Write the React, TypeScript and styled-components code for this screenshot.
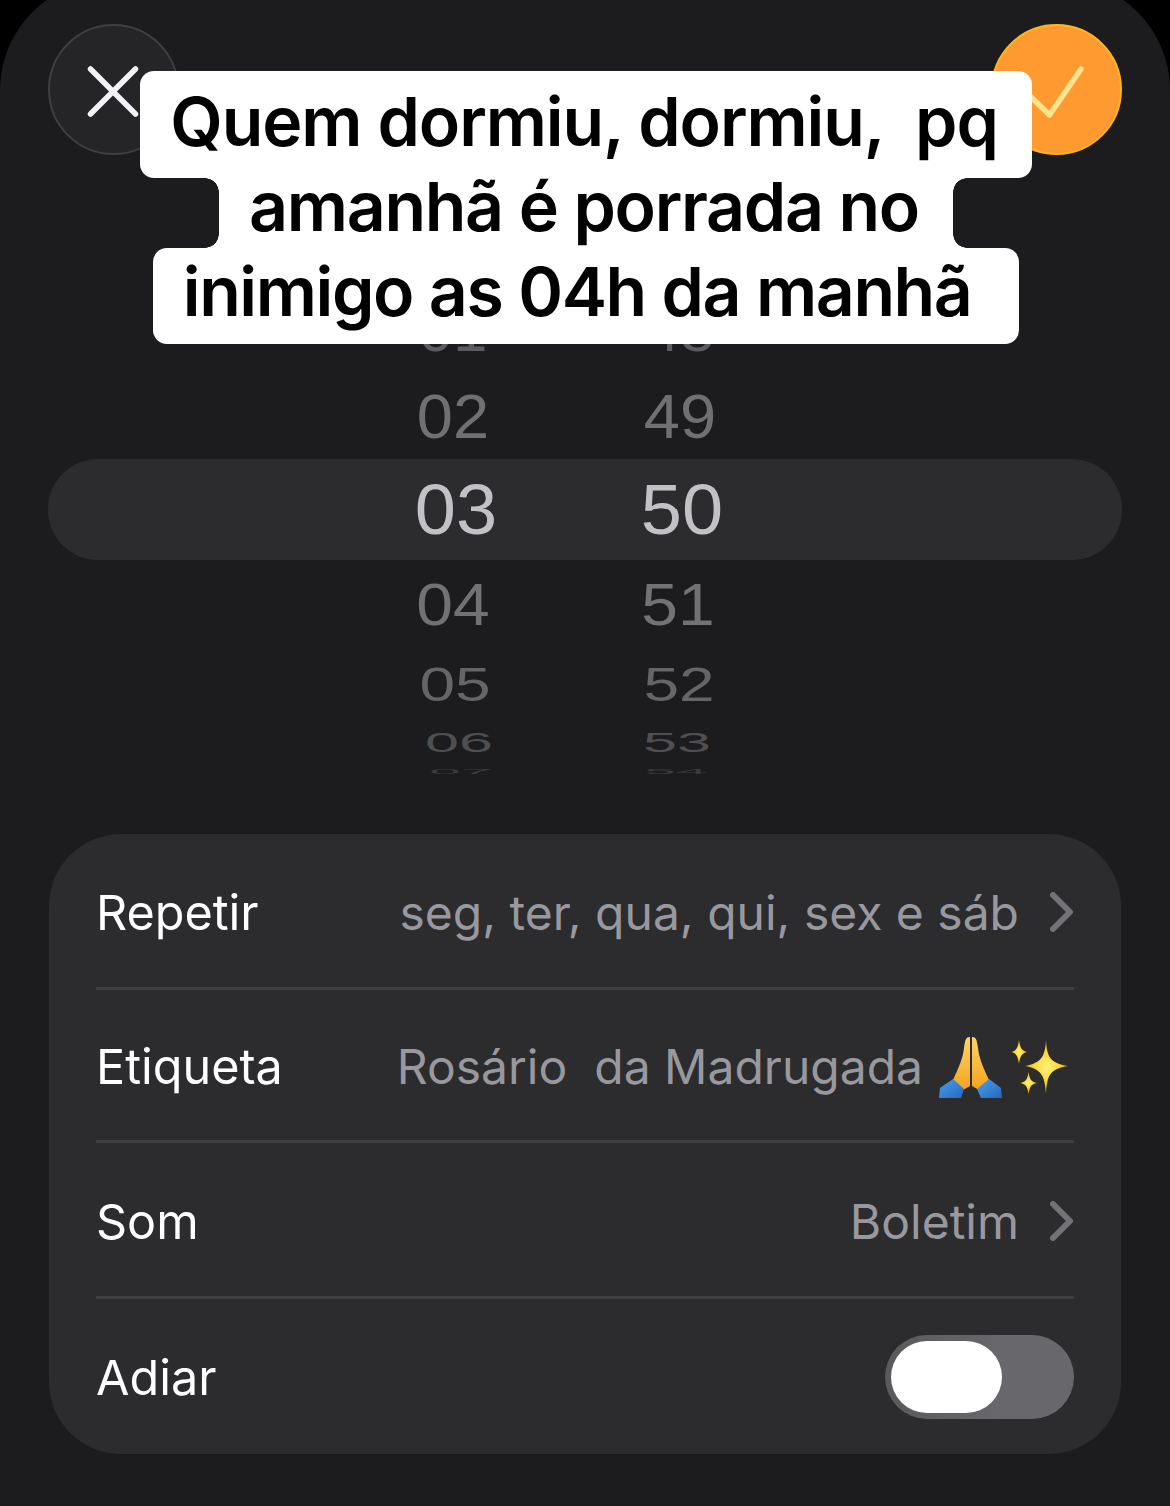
import React from 'react';
import styled, { createGlobalStyle } from 'styled-components';

const GlobalStyle = createGlobalStyle`
  html,
  body {
    margin: 0;
    padding: 0;
    background: #000;
  }
`;

const Page = styled.div`
  position: relative;
  width: 1170px;
  height: 1506px;
  overflow: hidden;
`;

const Sheet = styled.main`
  margin-top: -20px;
  height: 1526px;
  padding-top: 44px;
  box-sizing: border-box;
  background: #1c1c1e;
  border-radius: 110px 110px 0 0;
  font-family: Inter, 'Liberation Sans', sans-serif;
`;

const Header = styled.header`
  display: flex;
  align-items: center;
  justify-content: space-between;
  padding: 0 48px;
  height: 131px;
`;

const RoundButton = styled.button<{ $confirm?: boolean }>`
  display: flex;
  align-items: center;
  justify-content: center;
  width: 131px;
  height: 131px;
  padding: 0;
  box-sizing: border-box;
  border-radius: 50%;
  border: 2px solid ${(p) => (p.$confirm ? '#ffb61e' : '#3f3f41')};
  background: ${(p) => (p.$confirm ? '#ff9a30' : '#252527')};
`;

const Wheel = styled.section`
  margin-top: 136px;
  font-family: 'Liberation Sans', Arial, sans-serif;
`;

const WheelRow = styled.div<{ $height: number; $selected?: boolean }>`
  display: grid;
  grid-template-columns: 100px 100px;
  grid-template-rows: ${(p) => p.$height}px;
  column-gap: 126px;
  align-items: center;
  height: ${(p) => p.$height}px;
  margin: 0 48px;
  padding-left: 357px;
  border-radius: 50px;
  background: ${(p) => (p.$selected ? '#2c2c2f' : 'transparent')};
`;

const Digits = styled.span<{
  $size: number;
  $squash: number;
  $color: string;
  $shift: number;
}>`
  display: block;
  text-align: center;
  line-height: 1;
  font-size: ${(p) => p.$size}px;
  color: ${(p) => p.$color};
  transform: translateX(${(p) => p.$shift}px) scaleY(${(p) => p.$squash});
`;

const Card = styled.section`
  margin: 54px 49px 0;
  padding: 0 47px;
  height: 620px;
  box-sizing: border-box;
  background: #2c2c2e;
  border-radius: 72px;
`;

const Row = styled.div<{ $height: number; $last?: boolean }>`
  display: flex;
  align-items: center;
  justify-content: space-between;
  height: ${(p) => p.$height}px;
  padding-top: ${(p) => (p.$last ? 1 : 3)}px;
  box-sizing: border-box;
  border-bottom: ${(p) => (p.$last ? 'none' : '3px solid #3f3f41')};
`;

const Label = styled.span`
  font-size: 48.5px;
  color: #fff;
`;

const Value = styled.span`
  display: flex;
  align-items: center;
  font-size: 48px;
  color: #98989e;
  white-space: pre;
`;

const Chevron = styled.svg`
  margin-left: 31px;
`;

const HandsIcon = styled.svg`
  margin-left: 16px;
`;

const SparklesIcon = styled.svg`
  margin: 0 6px 0 7px;
`;

const Toggle = styled.div`
  display: flex;
  align-items: center;
  width: 189px;
  height: 84px;
  padding-left: 6px;
  box-sizing: border-box;
  border-radius: 42px;
  background: linear-gradient(90deg, #59595b, #68686c 60%);
`;

const Thumb = styled.div`
  width: 111px;
  height: 72px;
  border-radius: 36px;
  background: #fff;
`;

const Caption = styled.div`
  position: absolute;
  top: 71px;
  left: 2px;
  right: 0;
  display: flex;
  flex-direction: column;
  align-items: center;
  font-family: Inter, 'Liberation Sans', sans-serif;
  font-weight: 600;
  font-size: 68px;
  line-height: 56px;
  color: #000;
`;

const CaptionLine = styled.div<{
  $top: number;
  $bottom: number;
  $left: number;
  $right: number;
  $spacing: number;
  $inset?: boolean;
}>`
  position: relative;
  padding: ${(p) => p.$top}px ${(p) => p.$right}px ${(p) => p.$bottom}px ${(p) => p.$left}px;
  letter-spacing: ${(p) => p.$spacing}px;
  background: #fff;
  border-radius: 14px;
  white-space: pre;

  ${(p) =>
    p.$inset &&
    `
    border-radius: 0;

    &::before,
    &::after {
      content: '';
      position: absolute;
      top: 0;
      bottom: 0;
      width: 14px;
      background-repeat: no-repeat;
      background-size: 14px 14px;
    }

    &::before {
      left: -14px;
      background-image:
        radial-gradient(circle at 0 100%, transparent 13.5px, #fff 14px),
        radial-gradient(circle at 0 0, transparent 13.5px, #fff 14px);
      background-position: top, bottom;
    }

    &::after {
      right: -14px;
      background-image:
        radial-gradient(circle at 100% 100%, transparent 13.5px, #fff 14px),
        radial-gradient(circle at 100% 0, transparent 13.5px, #fff 14px);
      background-position: top, bottom;
    }
  `}
`;

const wheelRows = [
  { height: 80, hour: '01', minute: '48', size: 62, squash: 0.95, color: '#5c5c5e', hourShift: -2, minuteShift: -1 },
  { height: 88, hour: '02', minute: '49', size: 65, squash: 0.98, color: '#707072', hourShift: -2, minuteShift: -1 },
  { height: 101, hour: '03', minute: '50', size: 74, squash: 0.98, color: '#c2c2c6', selected: true, hourShift: 1, minuteShift: 1 },
  { height: 88, hour: '04', minute: '51', size: 66, squash: 0.91, color: '#727274', hourShift: -2, minuteShift: -3 },
  { height: 74, hour: '05', minute: '52', size: 64, squash: 0.74, color: '#656567', hourShift: 0, minuteShift: -2 },
  { height: 40, hour: '06', minute: '53', size: 61, squash: 0.46, color: '#4f4f51', hourShift: 4, minuteShift: -4 },
  { height: 18, hour: '07', minute: '54', size: 57, squash: 0.12, color: '#3a3a3c', hourShift: 6, minuteShift: -5 },
];

const RowChevron = () => (
  <Chevron width="24" height="40" viewBox="0 0 24 40" fill="none">
    <path d="M3 3 L20 20 L3 37" stroke="#727277" strokeWidth="6" strokeLinecap="round" strokeLinejoin="round" />
  </Chevron>
);

const PrayingHands = () => (
  <HandsIcon width="64" height="62" viewBox="0 0 64 62">
    <defs>
      <linearGradient id="skin" x1="0" y1="0" x2="0" y2="1">
        <stop offset="0" stopColor="#ffd566" />
        <stop offset="1" stopColor="#f3a21e" />
      </linearGradient>
      <linearGradient id="sleeve" x1="0" y1="0" x2="1" y2="1">
        <stop offset="0" stopColor="#4b9fec" />
        <stop offset="1" stopColor="#2467bd" />
      </linearGradient>
    </defs>
    <path d="M31 1 C27 1 26 4 25 12 C24 22 20 31 14 44 L24 54 L31 50 Z" fill="url(#skin)" />
    <path d="M33 1 C37 1 38 4 39 12 C40 22 44 31 50 44 L40 54 L33 50 Z" fill="url(#skin)" />
    <path d="M0 62 L1 52 L14 43 L25 53 L22 62 Z" fill="url(#sleeve)" />
    <path d="M63 62 L62 52 L50 43 L38 53 L42 62 Z" fill="url(#sleeve)" />
  </HandsIcon>
);

const Sparkles = () => (
  <SparklesIcon width="58" height="56" viewBox="0 0 58 56">
    <defs>
      <radialGradient id="spark">
        <stop offset="0" stopColor="#fff27d" />
        <stop offset="0.6" stopColor="#ffd42e" />
        <stop offset="1" stopColor="#f0ac12" />
      </radialGradient>
    </defs>
    <g fill="url(#spark)">
      <path d="M36 1 C37 18 40 24 58 27 C40 30 37 36 36 55 C35 36 31 30 15 27 C31 24 35 18 36 1 Z" />
      <path d="M9 1 C10 9 12 12 17 13 C12 14 10 17 9 25 C8 17 6 14 1 13 C6 12 8 9 9 1 Z" />
      <path d="M18.5 33 C19.5 40 21 43 27 44 C21 45 19.5 48 18.5 55 C17.5 48 16 45 10 44 C16 43 17.5 40 18.5 33 Z" />
    </g>
  </SparklesIcon>
);

const App = () => (
  <>
    <GlobalStyle />
    <Page>
      <Sheet>
        <Header>
          <RoundButton aria-label="Fechar">
            <svg width="60" height="60" viewBox="0 0 60 60" fill="none">
              <path d="M6.5 9 L51.5 54 M51.5 9 L6.5 54" stroke="#f2f2f7" strokeWidth="5.5" strokeLinecap="round" />
            </svg>
          </RoundButton>
          <RoundButton $confirm aria-label="Confirmar">
            <svg width="66" height="60" viewBox="0 0 66 60" fill="none">
              <path d="M3 33 L25.5 55 L57 9" stroke="#ffe48f" strokeWidth="5.5" strokeLinecap="round" strokeLinejoin="round" />
            </svg>
          </RoundButton>
        </Header>

        <Wheel>
          {wheelRows.map((r) => (
            <WheelRow key={r.hour} $height={r.height} $selected={r.selected}>
              <Digits $size={r.size} $squash={r.squash} $color={r.color} $shift={r.hourShift}>
                {r.hour}
              </Digits>
              <Digits $size={r.size} $squash={r.squash} $color={r.color} $shift={r.minuteShift}>
                {r.minute}
              </Digits>
            </WheelRow>
          ))}
        </Wheel>

        <Card>
          <Row $height={156}>
            <Label>Repetir</Label>
            <Value>
              seg, ter, qua, qui, sex e sáb
              <RowChevron />
            </Value>
          </Row>
          <Row $height={153}>
            <Label>Etiqueta</Label>
            <Value>
              {'Rosário  da Madrugada'}
              <PrayingHands />
              <Sparkles />
            </Value>
          </Row>
          <Row $height={156}>
            <Label>Som</Label>
            <Value>
              Boletim
              <RowChevron />
            </Value>
          </Row>
          <Row $height={155} $last>
            <Label>Adiar</Label>
            <Toggle>
              <Thumb />
            </Toggle>
          </Row>
        </Card>
      </Sheet>

      <Caption>
        <CaptionLine $top={22} $bottom={29} $left={30} $right={34} $spacing={-1.1}>{'Quem dormiu, dormiu,  pq'}</CaptionLine>
        <CaptionLine $top={0} $bottom={14} $left={30} $right={34} $spacing={-1.3} $inset>{'amanhã é porrada no'}</CaptionLine>
        <CaptionLine $top={15} $bottom={25} $left={30} $right={32} $spacing={-1.4}>{'inimigo as 04h da manhã '}</CaptionLine>
      </Caption>
    </Page>
  </>
);

export default App;
